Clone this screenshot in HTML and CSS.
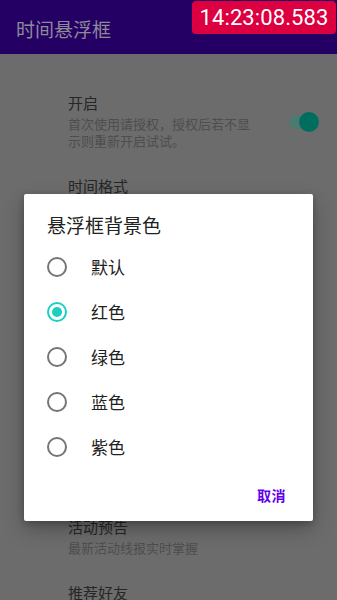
FILE: index.html
```html
<!DOCTYPE html>
<html lang="zh-CN">
<head>
<meta charset="utf-8">
<title>时间悬浮框</title>
<link rel="stylesheet" href="styles.css">
</head>
<body>
<div class="screen">
  <header class="appbar">
    <h1 class="appbar-title">时间悬浮框</h1>
  </header>
  <main class="prefs">
    <div class="pref pref-first">
      <div class="pref-text">
        <div class="pref-title">开启</div>
        <div class="pref-summary">首次使用请授权，授权后若不显示则重新开启试试。</div>
      </div>
      <div class="switch"><span class="switch-track"></span><span class="switch-thumb"></span></div>
    </div>
    <div class="pref">
      <div class="pref-text">
        <div class="pref-title">时间格式</div>
      </div>
    </div>
    <div class="pref pref-after-dialog">
      <div class="pref-text">
        <div class="pref-title">活动预告</div>
        <div class="pref-summary">最新活动线报实时掌握</div>
      </div>
    </div>
    <div class="pref">
      <div class="pref-text">
        <div class="pref-title">推荐好友</div>
        <div class="pref-summary">分享给好友</div>
      </div>
    </div>
  </main>

  <div class="clock-badge">14:23:08.583</div>

  <div class="dialog" role="dialog">
    <h2 class="dialog-title">悬浮框背景色</h2>
    <ul class="choices">
      <li class="choice"><span class="radio"></span><span class="choice-label">默认</span></li>
      <li class="choice"><span class="radio radio-on"></span><span class="choice-label">红色</span></li>
      <li class="choice"><span class="radio"></span><span class="choice-label">绿色</span></li>
      <li class="choice"><span class="radio"></span><span class="choice-label">蓝色</span></li>
      <li class="choice"><span class="radio"></span><span class="choice-label">紫色</span></li>
    </ul>
    <div class="dialog-actions">
      <button class="btn-text">取消</button>
    </div>
  </div>
</div>
</body>
</html>
```

FILE: styles.css
```css
* { box-sizing: border-box; }

html, body {
  margin: 0;
  padding: 0;
}

body {
  width: 337px;
  height: 600px;
  overflow: hidden;
  background: #6b6c6b;
  font-family: Roboto, "Noto Sans CJK SC", sans-serif;
}

.screen {
  position: relative;
  width: 337px;
  height: 600px;
  overflow: hidden;
}

.appbar {
  height: 54px;
  background: #250064;
  display: flex;
  align-items: center;
  padding: 4px 16px 0;
}

.appbar-title {
  margin: 0;
  font-size: 19px;
  font-weight: 400;
  color: #8e8a98;
  font-family: "Noto Sans CJK SC", sans-serif;
  line-height: 24px;
}

.prefs {
  display: flex;
  flex-direction: column;
}

.pref {
  display: flex;
  align-items: flex-start;
  padding: 14px 18px 13px 68px;
}

.pref-first {
  margin-top: 25px;
  align-items: center;
}

/* the items between "时间格式" and "活动预告" lie under the dialog */
.pref-after-dialog {
  margin-top: 294px;
}

.pref-text {
  flex: 1;
  min-width: 0;
  font-family: "Noto Sans CJK SC", sans-serif;
}

.pref-title {
  font-size: 15px;
  line-height: 20px;
  color: #262626;
}

.pref-summary {
  margin-top: 2px;
  font-size: 13px;
  line-height: 17px;
  color: #4d4e4d;
}

.pref-first .pref-text {
  flex: 0 0 185px;
}

.switch {
  position: relative;
  margin-left: auto;
  width: 30px;
  height: 20px;
  margin-top: 2px;
}

.switch-track {
  position: absolute;
  left: 0;
  top: 3px;
  width: 28px;
  height: 14px;
  border-radius: 7px;
  background: #4c7a73;
}

.switch-thumb {
  position: absolute;
  left: 10px;
  top: 0;
  width: 20px;
  height: 20px;
  border-radius: 50%;
  background: #006e5f;
}

.clock-badge {
  position: absolute;
  left: 192px;
  top: 1px;
  width: 144px;
  height: 33px;
  border-radius: 4px;
  background: #dc0040;
  color: #ffffff;
  font-family: Roboto, sans-serif;
  font-size: 22px;
  line-height: 33px;
  text-align: center;
  letter-spacing: 0.1px;
}

.dialog {
  position: absolute;
  left: 24px;
  top: 194px;
  width: 289px;
  height: 327px;
  background: #ffffff;
  border-radius: 2px;
  box-shadow: 0 8px 20px rgba(0, 0, 0, 0.28), 0 2px 6px rgba(0, 0, 0, 0.2);
  display: flex;
  flex-direction: column;
  font-family: "Noto Sans CJK SC", sans-serif;
}

.dialog-title {
  margin: 0;
  padding: 19px 23px 0;
  font-size: 19px;
  line-height: 24px;
  font-weight: 400;
  color: #212121;
}

.choices {
  list-style: none;
  margin: 7px 0 0;
  padding: 0;
}

.choice {
  display: flex;
  align-items: center;
  height: 45px;
  padding-left: 23px;
}

.radio {
  width: 20px;
  height: 20px;
  border: 2px solid #757575;
  border-radius: 50%;
  display: flex;
  align-items: center;
  justify-content: center;
  flex: none;
}

.radio-on {
  border-color: #1ccfc0;
}

.radio-on::after {
  content: "";
  width: 10px;
  height: 10px;
  border-radius: 50%;
  background: #1ccfc0;
}

.choice-label {
  margin-left: 24px;
  font-size: 17px;
  line-height: 22px;
  color: #212121;
}

.dialog-actions {
  margin-top: auto;
  display: flex;
  justify-content: flex-end;
  padding: 0 19px 8px 0;
}

.btn-text {
  border: 0;
  background: none;
  height: 36px;
  padding: 0 8px;
  font-family: "Noto Sans CJK SC", sans-serif;
  font-size: 14px;
  font-weight: 700;
  color: #6200ee;
  letter-spacing: 0.5px;
}
```
